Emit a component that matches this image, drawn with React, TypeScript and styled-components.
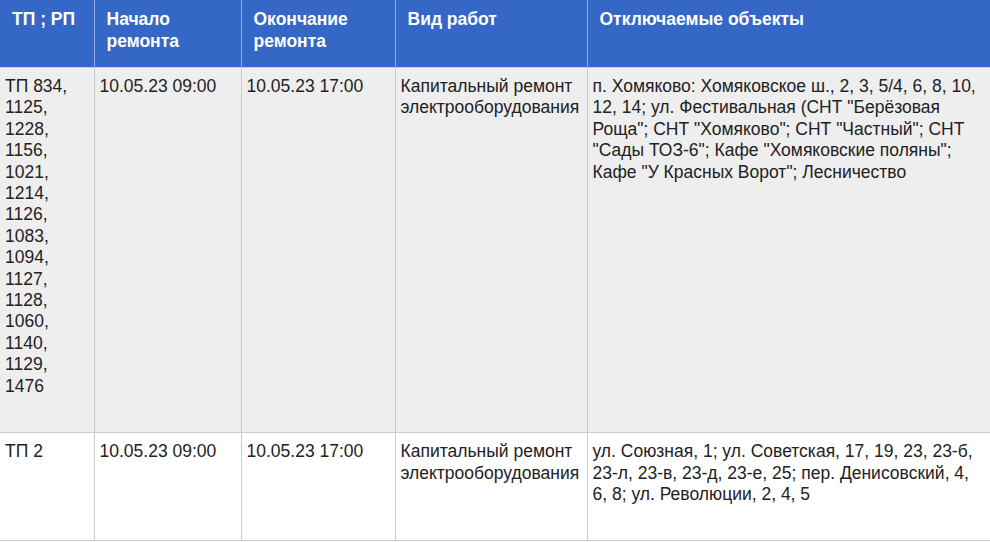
import React from "react";
import styled, { createGlobalStyle } from "styled-components";

const GlobalStyle = createGlobalStyle`
  html, body {
    margin: 0;
    padding: 0;
    background: #fff;
    overflow: hidden;
  }
  body {
    font-family: "Liberation Sans", Arial, sans-serif;
  }
`;

const Wrap = styled.div`
  width: 990px;
  overflow: hidden;
`;

const Table = styled.table`
  width: 992px;
  border-collapse: collapse;
  table-layout: fixed;
  font-size: 17.5px;
  color: #222;
`;

const Head = styled.th`
  background: #3567c6;
  color: #fff;
  font-weight: bold;
  text-align: left;
  vertical-align: top;
  line-height: 22px;
  height: 44px;
  padding: 8px 12px 15px;
  border-left: 1px solid #8eaae0;
  border-bottom: 1px solid #ccc;

  &:first-child {
    border-left: none;
  }
`;

const Row = styled.tr<{ $shaded?: boolean }>`
  background: ${(p) => (p.$shaded ? "#eeeeee" : "#fff")};
`;

const Cell = styled.td`
  vertical-align: top;
  line-height: 21.4px;
  padding: 8px 5px 35px;
  border: 1px solid #ccc;
  border-top: none;
  overflow-wrap: break-word;

  &:first-child {
    border-left: none;
  }
`;

type Item = {
  tp: string;
  start: string;
  end: string;
  kind: string;
  objects: string;
};

const items: Item[] = [
  {
    tp: "ТП 834, 1125, 1228, 1156, 1021, 1214, 1126, 1083, 1094, 1127, 1128, 1060, 1140, 1129, 1476",
    start: "10.05.23 09:00",
    end: "10.05.23 17:00",
    kind: "Капитальный ремонт электрооборудования",
    objects:
      'п. Хомяково: Хомяковское ш., 2, 3, 5/4, 6, 8, 10, 12, 14; ул. Фестивальная (СНТ "Берёзовая Роща"; СНТ "Хомяково"; СНТ "Частный"; СНТ "Сады ТОЗ-6"; Кафе "Хомяковские поляны"; Кафе "У Красных Ворот"; Лесничество',
  },
  {
    tp: "ТП 2",
    start: "10.05.23 09:00",
    end: "10.05.23 17:00",
    kind: "Капитальный ремонт электрооборудования",
    objects:
      "ул. Союзная, 1; ул. Советская, 17, 19, 23, 23-б, 23-л, 23-в, 23-д, 23-е, 25; пер. Денисовский, 4, 6, 8; ул. Революции, 2, 4, 5",
  },
];

const App: React.FC = () => {
  return (
    <Wrap>
      <GlobalStyle />
      <Table>
        <colgroup>
          <col style={{ width: 94 }} />
          <col style={{ width: 147 }} />
          <col style={{ width: 154 }} />
          <col style={{ width: 192 }} />
          <col />
        </colgroup>
        <thead>
          <tr>
            <Head>ТП ; РП</Head>
            <Head>Начало ремонта</Head>
            <Head>Окончание ремонта</Head>
            <Head>Вид работ</Head>
            <Head>Отключаемые объекты</Head>
          </tr>
        </thead>
        <tbody>
          {items.map((it, i) => (
            <Row key={i} $shaded={i % 2 === 0}>
              <Cell>{it.tp}</Cell>
              <Cell>{it.start}</Cell>
              <Cell>{it.end}</Cell>
              <Cell>{it.kind}</Cell>
              <Cell>{it.objects}</Cell>
            </Row>
          ))}
        </tbody>
      </Table>
    </Wrap>
  );
};

export default App;
